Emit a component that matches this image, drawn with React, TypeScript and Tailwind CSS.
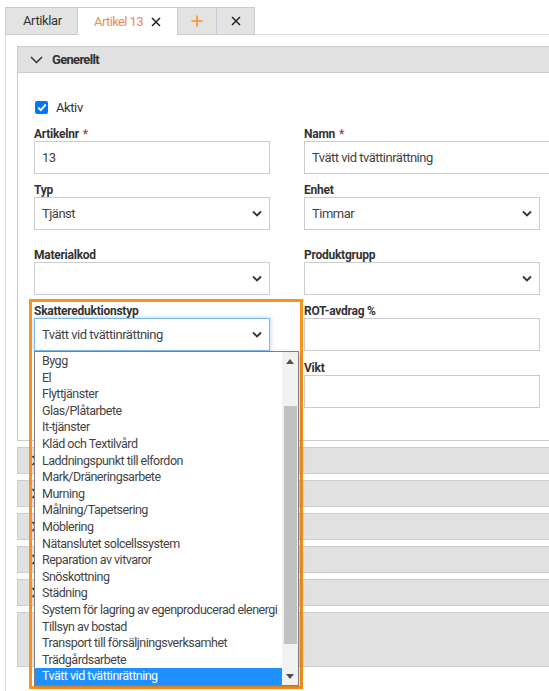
import React from "react";

const XIcon = ({ className = "" }: { className?: string }) => (
  <svg width="10" height="10" viewBox="0 0 10 10" className={className}>
    <path d="M1 1 L9 9 M9 1 L1 9" stroke="#222" strokeWidth="1.5" fill="none" />
  </svg>
);

const Chevron = () => (
  <svg width="10" height="7" viewBox="0 0 10 7">
    <path d="M1 1.5 L5 5.5 L9 1.5" stroke="#333" strokeWidth="1.8" fill="none" />
  </svg>
);

const Label = ({ text, req }: { text: string; req?: boolean }) => (
  <div className="h-[17px] leading-[21px] text-[12px] font-bold text-[#333] tracking-[-0.25px]">
    {text}
    {req && <span className="text-[#c0392b] ml-[4px]">*</span>}
  </div>
);

const Input = ({ value, wide }: { value?: string; wide?: boolean }) => (
  <div
    className={`h-[33px] border border-[#cccccc] bg-white flex items-center pl-[7px] text-[13px] text-[#444] tracking-[-0.5px] ${
      wide ? "w-[270px]" : "w-[236px]"
    }`}
  >
    {value}
  </div>
);

const Select = ({ value }: { value?: string }) => (
  <div className="h-[33px] w-[236px] border border-[#cccccc] bg-white flex items-center justify-between pl-[7px] pr-[7px] text-[13px] text-[#444] tracking-[-0.5px]">
    <span>{value}</span>
    <Chevron />
  </div>
);

const items = [
  "Bygg",
  "El",
  "Flyttjänster",
  "Glas/Plåtarbete",
  "It-tjänster",
  "Kläd och Textilvård",
  "Laddningspunkt till elfordon",
  "Mark/Dräneringsarbete",
  "Murning",
  "Målning/Tapetsering",
  "Möblering",
  "Nätanslutet solcellssystem",
  "Reparation av vitvaror",
  "Snöskottning",
  "Städning",
  "System för lagring av egenproducerad elenergi",
  "Tillsyn av bostad",
  "Transport till försäljningsverksamhet",
  "Trädgårdsarbete",
  "Tvätt vid tvättinrättning",
];

const Bar = ({ h, chevron }: { h: string; chevron?: boolean }) => (
  <div className={`mt-[6px] ${h} border border-r-0 border-[#cccccc] bg-[#e1e1e1] flex items-center pl-[13px]`}>
    {chevron && (
      <svg width="7" height="11" viewBox="0 0 7 11">
        <path d="M1.5 1 L5.5 5.5 L1.5 10" stroke="#333" strokeWidth="1.6" fill="none" />
      </svg>
    )}
  </div>
);

export default function App() {
  return (
    <div className="relative h-[691px] w-[549px] overflow-hidden bg-white text-[#333] font-['Roboto',sans-serif]">
      {/* Tabs */}
      <div className="flex pt-[7px] pl-[5px]">
        <div className="h-[28px] w-[72px] border-l border-t border-b border-[#cccccc] bg-[#e3e3e3] flex items-center pl-[17px] text-[13px] text-[#333] tracking-[-0.4px]">
          Artiklar
        </div>
        <div className="h-[28px] w-[100px] border-l border-t border-[#cccccc] bg-white flex items-center pl-[16px] gap-[8px] text-[13px] text-[#f08a55]">
          <span className="tracking-[-0.6px]">Artikel 13</span>
          <XIcon />
        </div>
        <div className="h-[28px] w-[39px] border-l border-t border-b border-[#cccccc] bg-[#e3e3e3] flex items-center justify-center">
          <svg width="12" height="12" viewBox="0 0 12 12">
            <path d="M6 0.5 V11.5 M0.5 6 H11.5" stroke="#f7931e" strokeWidth="1.6" fill="none" />
          </svg>
        </div>
        <div className="h-[28px] w-[39px] border-l border-r border-t border-b border-[#cccccc] bg-[#e3e3e3] flex items-center justify-center">
          <XIcon />
        </div>
        <div className="flex-1 h-[28px] border-b border-[#dddddd]" />
      </div>

      {/* Content */}
      <div className="ml-[5px] border-l border-[#dddddd] pl-[11px] pt-[11px] h-[700px] w-[600px]">
        <div className="h-[27px] border border-r-0 border-[#cccccc] bg-[#e1e1e1] flex items-center pl-[12px] gap-[9px]">
          <svg width="13" height="8" viewBox="0 0 13 8">
            <path d="M1 1 L6.5 6.5 L12 1" stroke="#333" strokeWidth="1.5" fill="none" />
          </svg>
          <span className="text-[13px] font-bold text-[#333] tracking-[-0.7px]">Generellt</span>
        </div>
        <div className="border-l border-b border-[#cccccc] pl-[16px] pt-[27px] pb-[32px]">
          <div className="flex items-center h-[15px] gap-[8px] pl-[1px]">
            <div className="w-[13px] h-[13px] rounded-[2px] bg-[#0075ff] flex items-center justify-center">
              <svg width="10" height="9" viewBox="0 0 10 9">
                <path d="M1.2 4.6 L3.8 7.2 L8.8 1.5" stroke="#fff" strokeWidth="1.9" fill="none" />
              </svg>
            </div>
            <span className="text-[13px] text-[#333] tracking-[-0.4px]">Aktiv</span>
          </div>
          <div className="mt-[9px] flex flex-col">
            <div className="flex gap-[34px]">
              <div>
                <Label text="Artikelnr" req />
                <Input value="13" />
              </div>
              <div>
                <Label text="Namn" req />
                <Input value="Tvätt vid tvättinrättning" wide />
              </div>
            </div>
            <div className="flex gap-[34px] mt-[6px]">
              <div>
                <Label text="Typ" />
                <Select value="Tjänst" />
              </div>
              <div>
                <Label text="Enhet" />
                <Select value="Timmar" />
              </div>
            </div>
            <div className="flex gap-[34px] mt-[15px]">
              <div>
                <Label text="Materialkod" />
                <Select />
              </div>
              <div>
                <Label text="Produktgrupp" />
                <Select />
              </div>
            </div>
            <div className="flex gap-[34px] mt-[6px]">
              <div>
                <Label text="Skattereduktionstyp" />
                <div className="h-[33px] w-[236px] border border-[#80b8e8] shadow-[0_0_5px_rgba(102,175,233,0.6)] bg-white flex items-center justify-between pl-[7px] pr-[7px] text-[13px] text-[#444] tracking-[-0.5px]">
                  <span>Tvätt vid tvättinrättning</span>
                  <Chevron />
                </div>
              </div>
              <div>
                <Label text="ROT-avdrag %" />
                <Input />
              </div>
            </div>
            <div className="flex gap-[34px] mt-[7px]">
              <div className="w-[236px]" />
              <div>
                <Label text="Vikt" />
                <Input />
              </div>
            </div>
          </div>
        </div>
        <Bar h="h-[27px]" chevron />
        <Bar h="h-[27px]" chevron />
        <Bar h="h-[27px]" chevron />
        <Bar h="h-[27px]" chevron />
        <Bar h="h-[27px]" chevron />
        <Bar h="h-[55px]" />
      </div>

      {/* Orange highlight */}
      <div className="absolute left-[29px] top-[299px] w-[274px] h-[390px] border-[3px] border-[#f7931e] pointer-events-none" />

      {/* Dropdown list */}
      <div className="absolute left-[34px] top-[351px] w-[265px] h-[335px] border border-[#808080] bg-white flex shadow-[2px_2px_4px_rgba(0,0,0,0.15)]">
        <div className="flex-1 pt-[1px] overflow-hidden">
          {items.map((it) => (
            <div
              key={it}
              className={`h-[16.6px] leading-[16.6px] pl-[7px] text-[12.5px] tracking-[-0.5px] whitespace-nowrap ${
                it === "Tvätt vid tvättinrättning" ? "bg-[#1e90ff] text-white" : "text-[#444]"
              }`}
            >
              {it}
            </div>
          ))}
        </div>
        <div className="w-[16px] bg-[#f1f1f1] flex flex-col items-center">
          <div className="h-[18px] flex items-center justify-center">
            <svg width="8" height="5" viewBox="0 0 8 5">
              <path d="M0 5 L4 0 L8 5 Z" fill="#505050" />
            </svg>
          </div>
          <div className="mt-[36px] h-[238px] w-[13px] bg-[#c1c1c1]" />
          <div className="mt-auto h-[18px] flex items-center justify-center">
            <svg width="8" height="5" viewBox="0 0 8 5">
              <path d="M0 0 L8 0 L4 5 Z" fill="#505050" />
            </svg>
          </div>
        </div>
      </div>
    </div>
  );
}
